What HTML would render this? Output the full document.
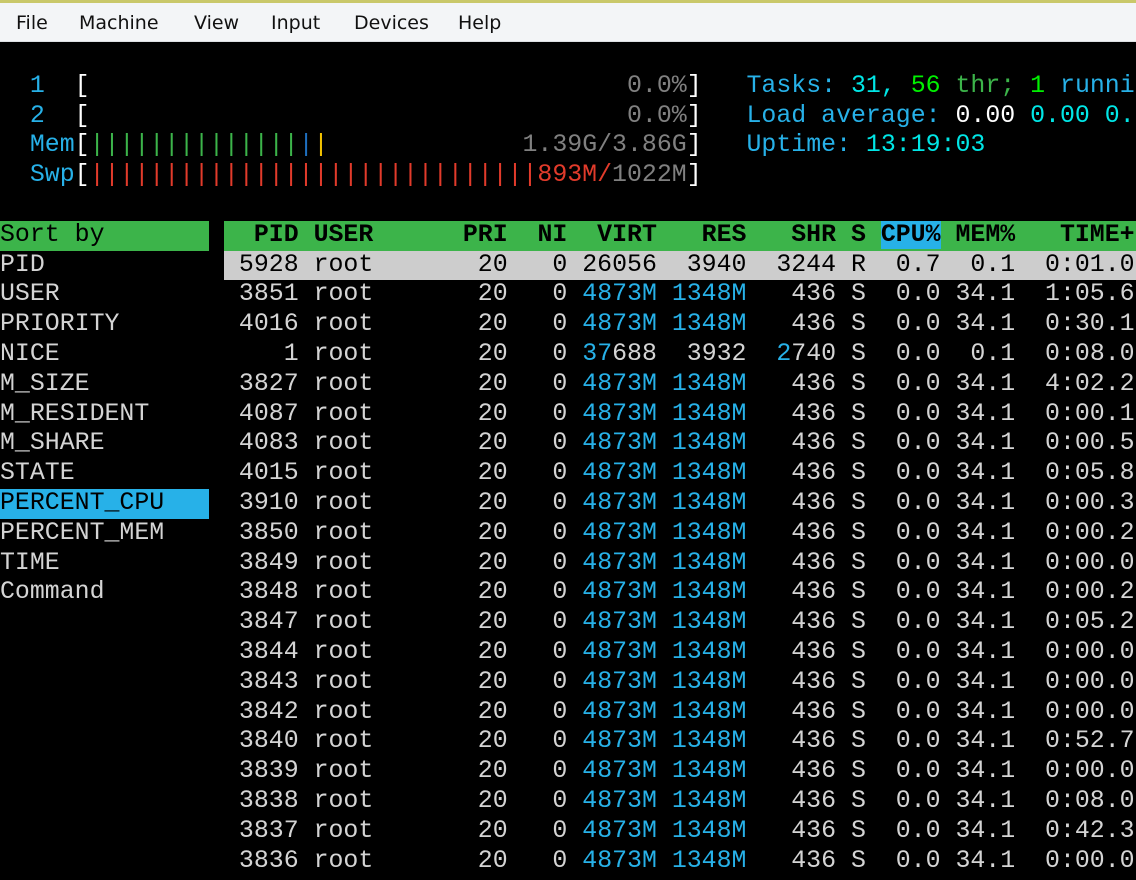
<!DOCTYPE html>
<html><head><meta charset="utf-8"><style>
body{margin:0;width:1136px;height:880px;overflow:hidden;background:#000;position:relative;font-family:"Liberation Mono",monospace;}
#menu{position:absolute;left:0;top:0;width:1136px;height:42px;background:#f3f5f7;border-top:3px solid #c9c86a;box-sizing:border-box;border-bottom:1px solid #dde0e3;font-family:"DejaVu Sans","Liberation Sans",sans-serif;font-size:19px;color:#111;}
#menu span{position:absolute;top:9px;}
.r{position:absolute;height:29.8px;line-height:29.8px;font-size:24.88px;white-space:pre;color:#d4d4d4;}
.b{color:#27b1e8}.c{color:#00e6e6}.g{color:#00f000}.dg{color:#3cb44a}.w{color:#fff}.gy{color:#808080}.rd{color:#e23b2b}.bl{color:#1e6fbf}.y{color:#f2c200}.k{color:#000}
#main{position:absolute;left:224px;top:0;width:912px;height:880px;overflow:hidden;}
</style></head><body>
<div id="menu"><span style="left:16px">File</span><span style="left:79px">Machine</span><span style="left:194px">View</span><span style="left:271px">Input</span><span style="left:354px">Devices</span><span style="left:458px">Help</span></div>

<div class="r" style="top:71.8px;left:0"><span class="b">  1  </span><span class="w">[</span><span class="gy">                                    0.0%</span><span class="w">]</span></div>
<div class="r" style="top:101.6px;left:0"><span class="b">  2  </span><span class="w">[</span><span class="gy">                                    0.0%</span><span class="w">]</span></div>
<div class="r" style="top:131.4px;left:0"><span class="b">  Mem</span><span class="w">[</span><span class="dg">||||||||||||||</span><span class="bl">|</span><span class="y">|</span><span class="gy">             1.39G/3.86G</span><span class="w">]</span></div>
<div class="r" style="top:161.2px;left:0"><span class="b">  Swp</span><span class="w">[</span><span class="rd">||||||||||||||||||||||||||||||893M/</span><span class="gy">1022M</span><span class="w">]</span></div>

<div class="r" style="top:71.8px;left:746.5px"><span class="b">Tasks: </span><span class="c">31, </span><span class="g">56</span><span class="dg"> thr; </span><span class="g">1</span><span class="b"> running</span></div>
<div class="r" style="top:101.6px;left:746.5px"><span class="b">Load average: </span><span class="w">0.00 </span><span class="c">0.00 0.00</span></div>
<div class="r" style="top:131.4px;left:746.5px"><span class="b">Uptime: </span><span class="c">13:19:03</span></div>

<div class="r k" style="top:220.8px;left:0;width:209px;background:#3cb44a;">Sort by</div>
<div class="r" style="top:250.6px;left:0">PID</div>
<div class="r" style="top:280.4px;left:0">USER</div>
<div class="r" style="top:310.2px;left:0">PRIORITY</div>
<div class="r" style="top:340px;left:0">NICE</div>
<div class="r" style="top:369.8px;left:0">M_SIZE</div>
<div class="r" style="top:399.6px;left:0">M_RESIDENT</div>
<div class="r" style="top:429.4px;left:0">M_SHARE</div>
<div class="r" style="top:459.2px;left:0">STATE</div>
<div class="r k" style="top:489px;left:0;width:209px;background:#27b1e8;">PERCENT_CPU</div>
<div class="r" style="top:518.8px;left:0">PERCENT_MEM</div>
<div class="r" style="top:548.6px;left:0">TIME</div>
<div class="r" style="top:578.4px;left:0">Command</div>

<div id="main">
<div class="r k" style="top:220.8px;left:0;width:912px;background:#3cb44a;font-weight:bold">  PID USER      PRI  NI  VIRT   RES   SHR S <span style="background:#27b1e8">CPU%</span> MEM%   TIME+  Command</div>
<div class="r k" style="top:250.6px;left:0;width:912px;background:#cdcdcd"> 5928 root       20   0 26056  3940  3244 R  0.7  0.1  0:01.02 htop</div>
<div class="r" style="top:280.4px;left:0"> 3851 root       20   0 <span class="b">4873M 1348M</span>   436 S  0.0 34.1  1:05.60 java</div>
<div class="r" style="top:310.2px;left:0"> 4016 root       20   0 <span class="b">4873M 1348M</span>   436 S  0.0 34.1  0:30.10 java</div>
<div class="r" style="top:340px;left:0">    1 root       20   0 <span class="b">37</span>688  3932  <span class="b">2</span>740 S  0.0  0.1  0:08.00 init</div>
<div class="r" style="top:369.8px;left:0"> 3827 root       20   0 <span class="b">4873M 1348M</span>   436 S  0.0 34.1  4:02.20 java</div>
<div class="r" style="top:399.6px;left:0"> 4087 root       20   0 <span class="b">4873M 1348M</span>   436 S  0.0 34.1  0:00.10 java</div>
<div class="r" style="top:429.4px;left:0"> 4083 root       20   0 <span class="b">4873M 1348M</span>   436 S  0.0 34.1  0:00.50 java</div>
<div class="r" style="top:459.2px;left:0"> 4015 root       20   0 <span class="b">4873M 1348M</span>   436 S  0.0 34.1  0:05.80 java</div>
<div class="r" style="top:489px;left:0"> 3910 root       20   0 <span class="b">4873M 1348M</span>   436 S  0.0 34.1  0:00.30 java</div>
<div class="r" style="top:518.8px;left:0"> 3850 root       20   0 <span class="b">4873M 1348M</span>   436 S  0.0 34.1  0:00.20 java</div>
<div class="r" style="top:548.6px;left:0"> 3849 root       20   0 <span class="b">4873M 1348M</span>   436 S  0.0 34.1  0:00.00 java</div>
<div class="r" style="top:578.4px;left:0"> 3848 root       20   0 <span class="b">4873M 1348M</span>   436 S  0.0 34.1  0:00.20 java</div>
<div class="r" style="top:608.2px;left:0"> 3847 root       20   0 <span class="b">4873M 1348M</span>   436 S  0.0 34.1  0:05.20 java</div>
<div class="r" style="top:638px;left:0"> 3844 root       20   0 <span class="b">4873M 1348M</span>   436 S  0.0 34.1  0:00.00 java</div>
<div class="r" style="top:667.8px;left:0"> 3843 root       20   0 <span class="b">4873M 1348M</span>   436 S  0.0 34.1  0:00.00 java</div>
<div class="r" style="top:697.6px;left:0"> 3842 root       20   0 <span class="b">4873M 1348M</span>   436 S  0.0 34.1  0:00.00 java</div>
<div class="r" style="top:727.4px;left:0"> 3840 root       20   0 <span class="b">4873M 1348M</span>   436 S  0.0 34.1  0:52.70 java</div>
<div class="r" style="top:757.2px;left:0"> 3839 root       20   0 <span class="b">4873M 1348M</span>   436 S  0.0 34.1  0:00.00 java</div>
<div class="r" style="top:787px;left:0"> 3838 root       20   0 <span class="b">4873M 1348M</span>   436 S  0.0 34.1  0:08.00 java</div>
<div class="r" style="top:816.8px;left:0"> 3837 root       20   0 <span class="b">4873M 1348M</span>   436 S  0.0 34.1  0:42.30 java</div>
<div class="r" style="top:846.6px;left:0"> 3836 root       20   0 <span class="b">4873M 1348M</span>   436 S  0.0 34.1  0:00.00 java</div>
</div>
</body></html>
